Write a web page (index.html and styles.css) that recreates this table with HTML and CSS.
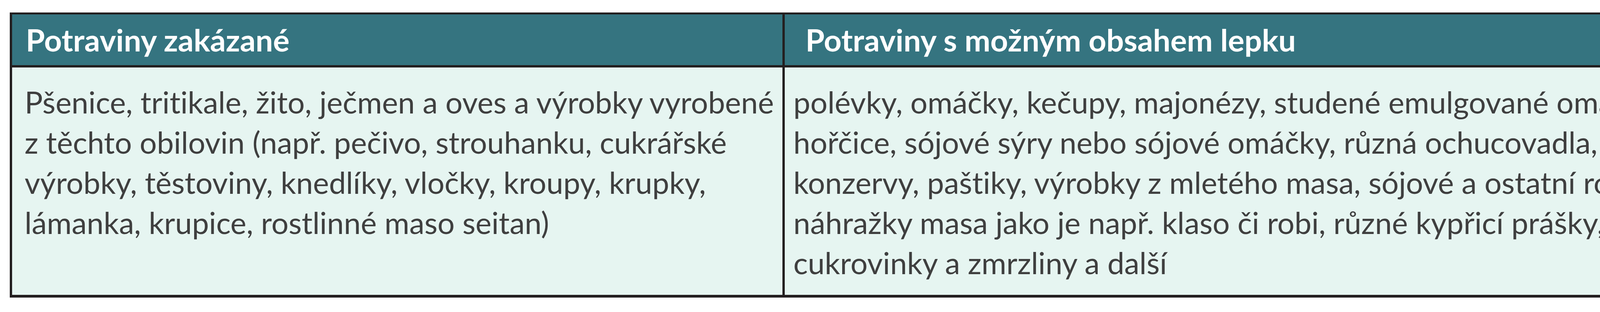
FILE: index.html
```html
<!DOCTYPE html>
<html lang="cs">
<head>
<meta charset="utf-8">
<title>Potraviny</title>
<link rel="stylesheet" href="styles.css">
</head>
<body>
<div class="food-table">
  <div class="cell head head-left">Potraviny zakázané</div>
  <div class="cell head head-right">Potraviny s možným obsahem lepku</div>
  <div class="cell body body-left">Pšenice, tritikale, žito, ječmen a oves a výrobky vyrobené<br>z těchto obilovin (např. pečivo, strouhanku, cukrářské<br>výrobky, těstoviny, knedlíky, vločky, kroupy, krupky,<br>lámanka, krupice, rostlinné maso seitan)</div>
  <div class="cell body body-right">polévky, omáčky, kečupy, majonézy, studené emulgované omáčky,<br>hořčice, sójové sýry nebo sójové omáčky, různá ochucovadla, uzeniny,<br>konzervy, paštiky, výrobky z mletého masa, sójové a ostatní rostlinné<br>náhražky masa jako je např. klaso či robi, různé kypřicí prášky, pudingy,<br>cukrovinky a zmrzliny a další</div>
</div>
</body>
</html>
```
FILE: styles.css
```css
html, body {
  margin: 0;
  padding: 0;
  background: #ffffff;
}

.food-table {
  margin: 32px 0 0 25px;
  width: 4477px;
  box-sizing: border-box;
  display: grid;
  grid-template-columns: 1972px minmax(0, 1fr);
  column-gap: 6px;
  row-gap: 6px;
  background: #231f20;
  border: 6px solid #231f20;
  border-top-width: 5px;
  border-bottom-width: 7px;
  font-family: Lato, "Open Sans", sans-serif;
  font-variant-ligatures: none;
}

.cell {
  white-space: nowrap;
}

.head {
  background: #357480;
  color: #ffffff;
  font-weight: 700;
  font-size: 79px;
  line-height: 94px;
  height: 130px;
  box-sizing: border-box;
  padding-top: 18px;
}

.head-left {
  padding-left: 35px;
}

.head-right {
  padding-left: 53px;
}

.body {
  background: #e6f5f1;
  color: #3f3f3f;
  font-size: 77.5px;
  line-height: 103px;
  padding-top: 37px;
  padding-bottom: 31px;
}

.body-left {
  padding-left: 32px;
}

.body-right {
  padding-left: 22px;
}
```
